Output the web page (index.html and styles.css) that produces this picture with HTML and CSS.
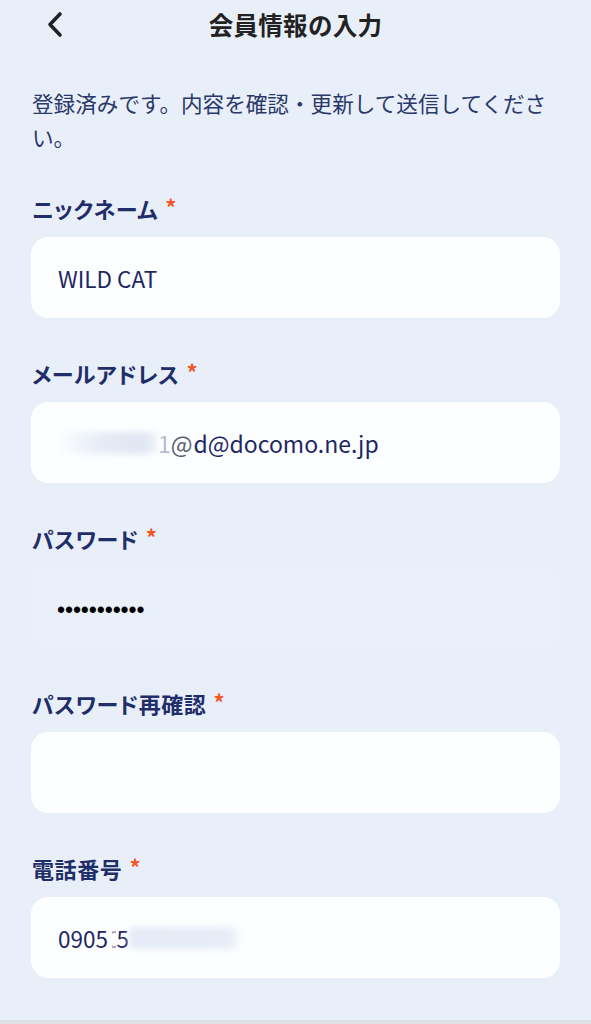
FILE: index.html
```html
<!DOCTYPE html>
<html lang="ja">
<head>
<meta charset="utf-8">
<title>会員情報の入力</title>
<link rel="stylesheet" href="styles.css">
</head>
<body>
<div class="page">
  <header class="topbar">
    <button class="back" aria-label="戻る">
      <svg width="24" height="30" viewBox="0 0 24 30"><polyline points="15,4 5,14.5 15,25" fill="none" stroke="#222" stroke-width="3.6" stroke-linecap="round" stroke-linejoin="round"/></svg>
    </button>
    <h1 class="title">会員情報の入力</h1>
  </header>

  <p class="intro">登録済みです。内容を確認・更新して送信してください。</p>

  <div class="field">
    <label class="label">ニックネーム<span class="req">*</span></label>
    <div class="box"><span class="value">WILD CAT</span></div>
  </div>

  <div class="field">
    <label class="label">メールアドレス<span class="req">*</span></label>
    <div class="box">
      <span class="blur blur-mail"></span>
      <span class="value value-mail"><span class="ghost">1</span><span class="dim">@</span>d@docomo.ne.jp</span>
    </div>
  </div>

  <div class="field">
    <label class="label">パスワード<span class="req">*</span></label>
    <div class="box box-pw"><span class="dots">•••••••••••</span></div>
  </div>

  <div class="field">
    <label class="label">パスワード再確認<span class="req">*</span></label>
    <div class="box"></div>
  </div>

  <div class="field">
    <label class="label">電話番号<span class="req">*</span></label>
    <div class="box">
      <span class="value">0905<span class="half">0</span>5</span>
      <span class="blur blur-tel"></span>
    </div>
  </div>

  <div class="footer-line"></div>
</div>
</body>
</html>
```

FILE: styles.css
```css
* { box-sizing: border-box; }
html, body { margin: 0; padding: 0; }
body {
  background: #e8eff9;
  font-family: "Noto Sans CJK JP", "Noto Sans", sans-serif;
  color: #1f2d69;
  overflow: hidden;
}
.page {
  width: 591px;
  height: 1024px;
  display: flex;
  flex-direction: column;
  padding: 0 31px;
}
.topbar {
  position: relative;
  height: 50px;
  display: flex;
  align-items: center;
  justify-content: center;
}
.back {
  position: absolute;
  left: 14px;
  top: 10px;
  width: 24px;
  height: 30px;
  padding: 0;
  border: 0;
  background: none;
  display: flex;
}
.title {
  margin: 0;
  font-size: 24.5px;
  font-weight: 700;
  color: #222;
  line-height: 50px;
  letter-spacing: 0.3px;
}
.intro {
  margin: 36px 0 0 1px;
  font-size: 21.6px;
  line-height: 34px;
  color: #2a386a;
  font-weight: 400;
}
.field {
  display: flex;
  flex-direction: column;
}
.intro + .field { margin-top: 39px; }
.field + .field { margin-top: 40px; }
.label {
  font-size: 22px;
  line-height: 30px;
  font-weight: 700;
  color: #1f2d69;
  font-feature-settings: "palt";
  letter-spacing: 0.6px;
  display: flex;
  align-items: flex-start;
  padding-left: 1px;
}
.req {
  color: #f0582a;
  font-size: 22px;
  line-height: 26px;
  margin-left: 7px;
  font-feature-settings: normal;
  letter-spacing: 0;
}
.box {
  margin-top: 14px;
  height: 81px;
  background: #fdfeff;
  border-radius: 17px;
  display: flex;
  align-items: center;
  padding-left: 27px;
  position: relative;
}
.box-pw {
  background: #eaf0fa;
  padding-left: 26px;
}
.value {
  font-size: 22.5px;
  color: #1d2863;
}
.value-mail { font-size: 23px; }
.ghost { color: #b9bdcc; }
.dim { color: #5a6072; margin-right: 1px; }
.half {
  background: linear-gradient(90deg, rgba(154,160,180,0) 55%, #9aa0b4 56%);
  -webkit-background-clip: text;
  background-clip: text;
  color: transparent;
  letter-spacing: -4px;
}
.blur {
  display: block;
  height: 22px;
  filter: blur(3px);
  border-radius: 4px;
}
.blur-mail {
  width: 100px;
  background: linear-gradient(90deg, rgba(226,233,244,0) 0%, rgba(226,233,244,0.9) 45%, #dfe6f1 85%, rgba(223,230,241,0.3) 100%);
}
.blur-tel {
  width: 112px;
  background: linear-gradient(90deg, #e4ebf6 0%, #e6edf7 90%, rgba(230,237,247,0) 100%);
}
.dots {
  font-family: "Liberation Sans", sans-serif;
  font-size: 23px;
  color: #000;
  letter-spacing: -0.1px;
  margin-top: 6px;
}
.footer-line {
  margin: auto -31px 0;
  height: 4px;
  background: #dde0e6;
}
```
